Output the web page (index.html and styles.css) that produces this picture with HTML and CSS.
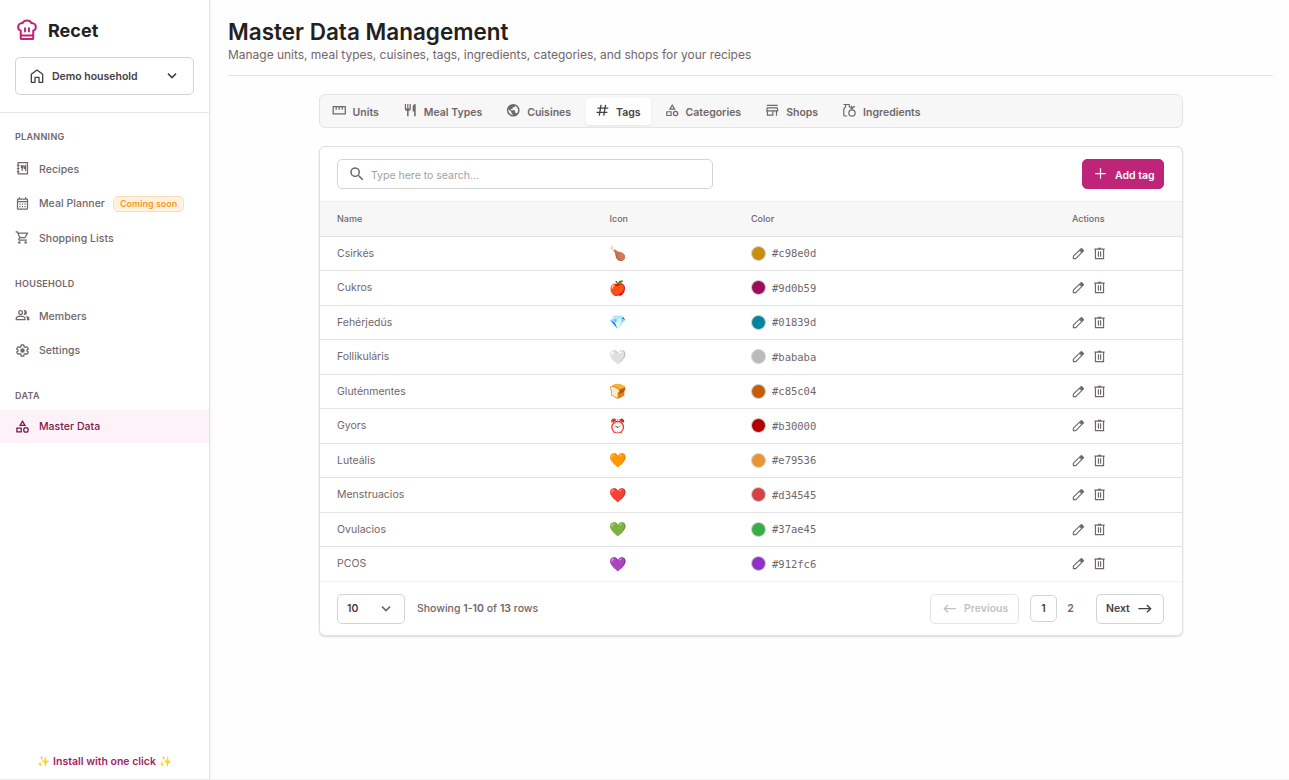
FILE: index.html
```html
<!DOCTYPE html>
<html lang="en">
<head>
<meta charset="utf-8">
<title>Recet – Master Data Management</title>
<link rel="stylesheet" href="styles.css">
</head>
<body>
<svg class="sprite" aria-hidden="true">
  <symbol id="chef" viewBox="0 0 24 24"><path d="M5.2 12.800A4.300 4.300 0 0 1 6 4.500h1.200a5.200 4.500 0 0 1 9.600 0H18a4.300 4.300 0 0 1 .8 8.300v8.100a1 1 0 0 1-1 1H6.200a1 1 0 0 1-1-1zM5.200 17.900h13.600M9.900 10v3.600M14.100 10v3.600" fill="none" stroke="currentColor" stroke-width="2.200" stroke-linecap="round" stroke-linejoin="round"/></symbol>
  <symbol id="home" viewBox="0 0 24 24"><path d="M3.500 9.500 12 3l8.500 6.500V21.500H15V14H9v7.500H3.500z" fill="none" stroke="currentColor" stroke-width="2" stroke-linejoin="round"/></symbol>
  <symbol id="down" viewBox="0 0 24 24"><path d="m6 8.500 6 6 6-6" fill="none" stroke="currentColor" stroke-width="2.300"/></symbol>
  <symbol id="book" viewBox="0 0 24 24"><path d="M5 2.500h15v18H5zM3 7h4M3 12h4M3 17h4M10 6.500v3a1.500 1.500 0 0 0 3 0v-3M11.500 7v9M17 16V7c-1.500.5-2 2-2 5h2" fill="none" stroke="currentColor" stroke-width="1.900"/></symbol>
  <symbol id="calendar" viewBox="0 0 24 24"><path d="M19 4h-1V2h-2v2H8V2H6v2H5a2 2 0 0 0-2 2v14a2 2 0 0 0 2 2h14a2 2 0 0 0 2-2V6a2 2 0 0 0-2-2m0 16H5V10h14zm0-12H5V6h14zM7 12h2v2H7zm4 0h2v2h-2zm4 0h2v2h-2zm-8 4h2v2H7zm4 0h2v2h-2zm4 0h2v2h-2z"/></symbol>
  <symbol id="cart" viewBox="0 0 24 24"><path d="M15.550 13c.75 0 1.410-.41 1.750-1.030l3.580-6.490A.996.996 0 0 0 20.010 4H5.210l-.94-2H1v2h2l3.600 7.590-1.350 2.440C4.520 15.370 5.480 17 7 17h12v-2H7l1.100-2zM6.160 6h12.150l-2.760 5H8.530zM7 18a2 2 0 1 0 0 4 2 2 0 0 0 0-4m10 0a2 2 0 1 0 0 4 2 2 0 0 0 0-4"/></symbol>
  <symbol id="group" viewBox="0 0 24 24"><path d="M9 3a4 4 0 1 0 0 8 4 4 0 0 0 0-8m0 2a2 2 0 1 1 0 4 2 2 0 0 1 0-4m0 7c-2.700 0-8 1.340-8 4v3.500h16V16c0-2.660-5.300-4-8-4m6 5.500H3V16c0-.64 3.130-2 6-2s6 1.360 6 2zm0-6.500a4 4 0 0 0 0-8c-.47 0-.92.080-1.340.230a6 6 0 0 1 0 7.540c.42.150.87.230 1.340.230m1.700 1.200C18.100 13.100 19 14.400 19 16v3.500h4V16c0-2.200-3.500-3.400-6.300-3.800"/></symbol>
  <symbol id="gear" viewBox="0 0 24 24"><path d="m10 3-.5 2.800-2 1.200L4.800 6 2.700 9.500 4.900 11.300v1.400l-2.200 1.800L4.800 18l2.700-1 2 1.200L10 21h4l.5-2.800 2-1.200 2.700 1 2.100-3.500-2.200-1.800v-1.400l2.200-1.800L19.200 6l-2.700 1-2-1.200L14 3z" fill="none" stroke="currentColor" stroke-width="2" stroke-linejoin="round"/><circle cx="12" cy="12" r="3.500"/></symbol>
  <symbol id="category" viewBox="0 0 24 24"><path d="m12 1.500-5.700 9.500h11.400zm0 3.900L14.100 9H9.900zM17.500 12.800a4.600 4.600 0 1 0 0 9.200 4.600 4.600 0 0 0 0-9.200m0 7.200a2.600 2.600 0 1 1 0-5.200 2.600 2.600 0 0 1 0 5.200M2 21.700h9v-8.200H2zm2-6.200h5v4.200H4z" fill-rule="evenodd"/></symbol>
  <symbol id="ruler" viewBox="0 0 24 24"><path d="M2 6h20v12H2zM7 6v5M12 6v5M17 6v5" fill="none" stroke="currentColor" stroke-width="2.100" stroke-linejoin="round"/></symbol>
  <symbol id="restaurant" viewBox="0 0 24 24"><path d="M11 9H9V1.500H7V9H5V1.500H3V9c0 2.120 1.660 3.840 3.750 3.970V22h2.500v-9.030C11.340 12.840 13 11.120 13 9V1.500h-2zm5-3v8h2.500v8H21V1.500c-2.760 0-5 2.240-5 4.500"/></symbol>
  <symbol id="public" viewBox="0 0 24 24"><path d="M12 1.500a10.500 10.500 0 1 0 0 21 10.500 10.500 0 0 0 0-21m-1 18.430A7.990 7.990 0 0 1 4.210 10.210L9 15v1a2 2 0 0 0 2 2zm6.900-2.540A2 2 0 0 0 16 16h-1v-3a1 1 0 0 0-1-1H8v-2h2a1 1 0 0 0 1-1V7h2a2 2 0 0 0 2-2v-.41a7.990 7.990 0 0 1 2.900 12.800"/></symbol>
  <symbol id="hash" viewBox="0 0 24 24"><path d="m10 3-3 18M17.500 3l-3 18M4 8.500h18M2.500 15.500h18" fill="none" stroke="currentColor" stroke-width="2.200"/></symbol>
  <symbol id="store" viewBox="0 0 24 24"><path d="M3 3h18v2H3zM19.400 9l.6 3H4l.6-3zM21 7H3l-1 5v2h1v7h11v-7h4v7h2v-7h2v-2zM5 19v-5h7v5z" fill-rule="evenodd"/></symbol>
  <symbol id="grocery" viewBox="0 0 24 24"><path d="M8.500 21.500h-4A1.500 1.500 0 0 1 3 20V10l3-4V2.500M2.500 2.500H12v3l1.500 2M14 8l3 2.500M17 10c0-3 1.500-4 4.500-4M15 4.500l2 3.500" fill="none" stroke="currentColor" stroke-width="2"/><circle cx="16.500" cy="16.500" r="5.200" fill="none" stroke="currentColor" stroke-width="2"/></symbol>
  <symbol id="search" viewBox="0 0 24 24"><path d="M15.500 14h-.79l-.28-.27a6.500 6.500 0 1 0-.7.700l.27.280v.79l5 4.990L20.490 19zm-6 0a4.500 4.500 0 1 1 0-9 4.500 4.500 0 0 1 0 9"/></symbol>
  <symbol id="plus" viewBox="0 0 24 24"><path d="M11 3.500h2V11h7.500v2H13v7.500h-2V13H3.500v-2H11z"/></symbol>
  <symbol id="edit" viewBox="0 0 24 24"><path d="m14 6 4 4M2.500 21.500v-4.500L17 3l4 4L7 21.500z" fill="none" stroke="currentColor" stroke-width="2.100" stroke-linejoin="round"/><path d="m14.500 5.500 3.500-3.500 4.500 4.500-3.500 3z"/></symbol>
  <symbol id="trash" viewBox="0 0 24 24"><path d="M4.500 4.500v17h15v-17M2.500 4h19M9 2.500h6M10 8v10M14 8v10" fill="none" stroke="currentColor" stroke-width="2.200"/></symbol>
  <symbol id="left" viewBox="0 0 24 24"><path d="M21 11.500H3.500M9 6l-5.500 5.500L9 17" fill="none" stroke="currentColor" stroke-width="2.100"/></symbol>
  <symbol id="right" viewBox="0 0 24 24"><path d="M2 11.500h18.500M15 6l5.500 5.500L15 17" fill="none" stroke="currentColor" stroke-width="2.100"/></symbol>
</svg>
<div class="app">
  <aside class="sidebar">
    <div class="sidebar-top">
      <div class="brand"><svg class="logo"><use href="#chef"/></svg><span>Recet</span></div>
      <button class="household"><svg class="icon-home"><use href="#home"/></svg><span>Demo household</span><svg class="chevron"><use href="#down"/></svg></button>
    </div>
    <nav>
      <h2>PLANNING</h2>
      <a><svg><use href="#book"/></svg>Recipes</a>
      <a><svg><use href="#calendar"/></svg>Meal Planner<span class="badge">Coming soon</span></a>
      <a><svg><use href="#cart"/></svg>Shopping Lists</a>
      <h2>HOUSEHOLD</h2>
      <a><svg><use href="#group"/></svg>Members</a>
      <a><svg><use href="#gear"/></svg>Settings</a>
      <h2 class="data-title">DATA</h2>
      <a class="active"><svg><use href="#category"/></svg>Master Data</a>
    </nav>
    <div class="install">✨ Install with one click ✨</div>
  </aside>
  <main>
    <header><h1>Master Data Management</h1><p>Manage units, meal types, cuisines, tags, ingredients, categories, and shops for your recipes</p></header>
    <div class="content">
      <div class="tabs">
        <a><svg><use href="#ruler"/></svg>Units</a>
        <a><svg><use href="#restaurant"/></svg>Meal Types</a>
        <a><svg><use href="#public"/></svg>Cuisines</a>
        <a class="selected"><svg><use href="#hash"/></svg>Tags</a>
        <a><svg><use href="#category"/></svg>Categories</a>
        <a><svg><use href="#store"/></svg>Shops</a>
        <a><svg><use href="#grocery"/></svg>Ingredients</a>
      </div>
      <section class="card">
        <div class="toolbar">
          <div class="search"><svg><use href="#search"/></svg><span>Type here to search...</span></div>
          <button class="add"><svg><use href="#plus"/></svg>Add tag</button>
        </div>
        <div class="row head"><span>Name</span><span>Icon</span><span>Color</span><span>Actions</span></div>
        <div class="row"><span>Csirkés</span><span class="emoji">🍗</span><span class="color"><i style="background:#c98e0d"></i>#c98e0d</span><span class="actions"><svg><use href="#edit"/></svg><svg><use href="#trash"/></svg></span></div>
        <div class="row"><span>Cukros</span><span class="emoji">🍎</span><span class="color"><i style="background:#9d0b59"></i>#9d0b59</span><span class="actions"><svg><use href="#edit"/></svg><svg><use href="#trash"/></svg></span></div>
        <div class="row"><span>Fehérjedús</span><span class="emoji">💎</span><span class="color"><i style="background:#01839d"></i>#01839d</span><span class="actions"><svg><use href="#edit"/></svg><svg><use href="#trash"/></svg></span></div>
        <div class="row"><span>Follikuláris</span><span class="emoji">🤍</span><span class="color"><i style="background:#bababa"></i>#bababa</span><span class="actions"><svg><use href="#edit"/></svg><svg><use href="#trash"/></svg></span></div>
        <div class="row"><span>Gluténmentes</span><span class="emoji">🍞</span><span class="color"><i style="background:#c85c04"></i>#c85c04</span><span class="actions"><svg><use href="#edit"/></svg><svg><use href="#trash"/></svg></span></div>
        <div class="row"><span>Gyors</span><span class="emoji">⏰</span><span class="color"><i style="background:#b30000"></i>#b30000</span><span class="actions"><svg><use href="#edit"/></svg><svg><use href="#trash"/></svg></span></div>
        <div class="row"><span>Luteális</span><span class="emoji">🧡</span><span class="color"><i style="background:#e79536"></i>#e79536</span><span class="actions"><svg><use href="#edit"/></svg><svg><use href="#trash"/></svg></span></div>
        <div class="row"><span>Menstruacios</span><span class="emoji">❤️</span><span class="color"><i style="background:#d34545"></i>#d34545</span><span class="actions"><svg><use href="#edit"/></svg><svg><use href="#trash"/></svg></span></div>
        <div class="row"><span>Ovulacios</span><span class="emoji">💚</span><span class="color"><i style="background:#37ae45"></i>#37ae45</span><span class="actions"><svg><use href="#edit"/></svg><svg><use href="#trash"/></svg></span></div>
        <div class="row last"><span>PCOS</span><span class="emoji">💜</span><span class="color"><i style="background:#912fc6"></i>#912fc6</span><span class="actions"><svg><use href="#edit"/></svg><svg><use href="#trash"/></svg></span></div>
        <div class="pager">
          <button class="size">10<svg><use href="#down"/></svg></button>
          <span class="summary">Showing <b>1-10</b> of <b>13</b> rows</span>
          <button class="prev" disabled><svg><use href="#left"/></svg>Previous</button>
          <button class="page current">1</button>
          <button class="page">2</button>
          <button class="next">Next<svg><use href="#right"/></svg></button>
        </div>
      </section>
    </div>
  </main>
</div>
</body>
</html>
```
FILE: styles.css
```css
* { box-sizing: border-box; margin: 0; }
body { font-family: Inter, sans-serif; background: #fefefe; color: #716669; overflow: hidden; }
svg { fill: currentColor; flex: none; display: block; }
.sprite { display: none; }
button { font: inherit; background: #fff; border: 1px solid #d4d4d4; color: #464043; display: flex; align-items: center; border-radius: 5px; padding: 0; white-space: nowrap; }
.app { display: flex; height: 780px; border-bottom: 1px solid #f4f4f4; }
.sidebar { width: 210px; flex: none; background: #fff; border-right: 1px solid #e3e3e3; box-shadow: 0 0 3px rgba(0,0,0,.08); display: flex; flex-direction: column; }
.sidebar-top { height: 113px; padding: 18px 15px 0; border-bottom: 1px solid #e8e8e8; }
.brand { display: flex; align-items: center; height: 25px; color: #222; font-size: 18px; font-weight: 700; }
.logo { width: 22px; height: 22px; color: #be2477; margin: -1px 10px 0 1px; }
.household { width: 179px; height: 38px; margin-top: 14px; padding: 0 13px; font-size: 10.500px; font-weight: 600; }
.icon-home { width: 16px; height: 16px; margin-right: 7px; }
.chevron { width: 16px; height: 16px; margin-left: auto; }
nav h2 { font-size: 9px; font-weight: 600; letter-spacing: .3px; line-height: 12px; padding-left: 15px; margin: 17.500px 0 10px; }
nav h2:not(:first-child) { margin: 23.500px 0 9.500px; }
nav h2.data-title { margin: 23px 0 8px; }
nav a { display: flex; align-items: center; height: 33px; margin-bottom: 1.500px; padding-left: 15px; font-size: 10.500px; font-weight: 500; letter-spacing: .04px; }
nav a svg { width: 15px; height: 15px; margin: -1px 9px 0 0; }
nav a.active { background: #fdf2f8; color: #78184f; }
.badge { margin-left: 8px; height: 16px; line-height: 14px; padding: 0 6px; border: 1px solid #ffddb6; background: #fff2e1; color: #f99817; border-radius: 5px; font-size: 9px; font-weight: 600; letter-spacing: 0; }
.install { margin-top: auto; text-align: center; color: #a71d67; font-size: 10.500px; font-weight: 600; height: 25px; line-height: 15px; }
main { flex: 1; padding: 17px 16px 0 18px; }
header { height: 59px; border-bottom: 1px solid #e3e3e3; }
h1 { color: #232021; font-size: 22.500px; font-weight: 600; line-height: 30px; }
header p { font-size: 12px; line-height: 16px; letter-spacing: -.025px; }
.content { width: 864px; margin: 18px 0 0 91px; }
.tabs { display: flex; gap: 5px; align-items: center; height: 34px; padding: 0 2.500px; border: 1px solid #e5e5e5; background: #f7f7f7; border-radius: 6px; }
.tabs a { display: flex; align-items: center; height: 27px; padding: 2px 10px 0 9px; font-size: 10.500px; font-weight: 600; border-radius: 3px; }
.tabs svg { width: 14.500px; height: 14.500px; margin: -3px 6.500px 0 0; }
.tabs .selected { color: #464043; background: #fff; box-shadow: 0 1px 2px rgba(0,0,0,.08); }
.card { height: 490px; margin-top: 18px; border: 1px solid #e0e0e0; border-radius: 6px; background: #fff; box-shadow: 0 1px 2px rgba(0,0,0,.14); overflow: hidden; }
.toolbar { display: flex; justify-content: space-between; padding: 12px 18px 0 17px; height: 53.500px; }
.search { display: flex; align-items: center; width: 376px; height: 30px; padding: 2px 0 0 10px; border: 1px solid #d4d4d4; border-radius: 5px; font-size: 10.500px; color: #a3a0a1; }
.search svg { width: 18px; height: 18px; margin: -2px 5px 0 0; color: #716669; }
.add { height: 30px; width: 82px; padding: 2px 0 0 10px; background: #be2477; border-color: #be2477; color: #fff; font-size: 10.500px; font-weight: 600; }
.add svg { width: 15px; height: 15px; margin: -3px 7px 0 0; }
.row { display: grid; grid-template-columns: 272.500px 141.500px 321px 1fr; align-items: center; height: 34.500px; padding-left: 17px; border-bottom: 1px solid #e2e2e2; font-size: 10.500px; }
.head { height: 36px; background: #f7f7f7; border-top: 1px solid #eee; font-size: 9px; font-weight: 500; }
.last { border-color: #f3f3f3; }
.emoji { font-size: 14px; line-height: 18px; font-family: "Noto Color Emoji", sans-serif; }
.color { display: flex; align-items: center; font: 10.500px "DejaVu Sans Mono", monospace; }
.color i { width: 15px; height: 15px; border: 1px solid #d4d4d4; border-radius: 50%; margin-right: 6px; }
.actions { display: flex; gap: 8px; margin-left: -.5px; }
.actions svg { width: 13px; height: 13px; }
.pager { display: flex; align-items: center; height: 54px; padding: 0 18px 0 17px; font-size: 10.500px; font-weight: 500; }
.size { width: 68px; height: 30px; justify-content: space-between; padding: 0 10px 0 9px; font-weight: 600; }
.size svg { width: 16px; height: 16px; color: #716669; }
.summary { margin-left: 12px; }
.summary b { font-weight: 600; }
.prev { height: 30px; width: 89px; margin-left: auto; padding-left: 11px; color: #c5c0c2; border-color: #e5e5e5; font-weight: 600; }
.prev svg { width: 16px; height: 16px; margin-right: 6px; }
.page { width: 27px; height: 27px; justify-content: center; font-weight: 600; border-color: transparent; color: #716669; }
.page.current { margin-left: 11px; border-color: #d4d4d4; color: #464043; }
.next { width: 68px; height: 30px; margin-left: 12px; padding-left: 9px; font-weight: 600; }
.next svg { width: 16px; height: 16px; margin-left: 7px; }
```
